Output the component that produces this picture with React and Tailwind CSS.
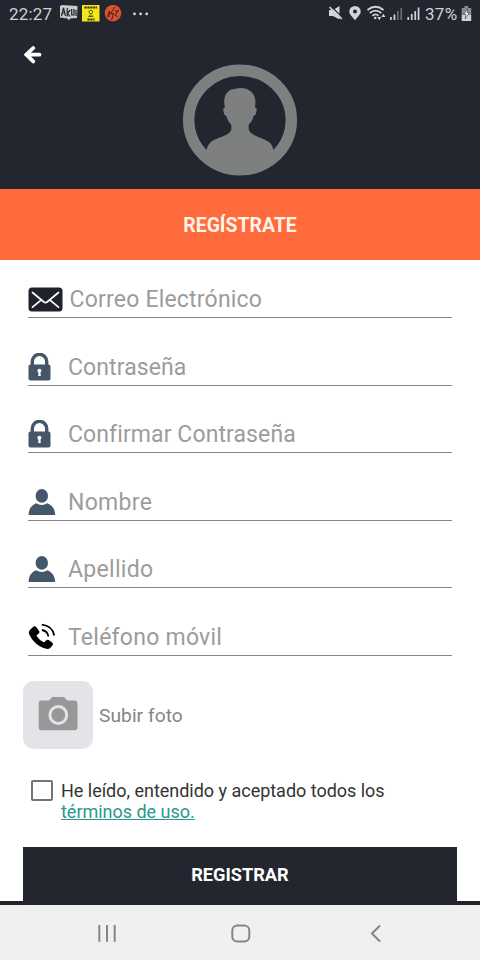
import React, { useState } from 'react';

const MailIcon = () => (
    <svg width="35" height="25" viewBox="0 0 35 25" fill="none">
        <rect x="0.5" y="0.5" width="34" height="24" rx="3.5" fill="#20222b" />
        <path d="M4.5 5.5 L15.9 15 Q17.5 16.2 19.1 15 L30.5 5.5 M4.5 20.2 L13.3 12.8 M30.5 20.2 L21.7 12.8" stroke="#fff" strokeWidth="1.7" strokeLinecap="round" />
    </svg>
);

const LockIcon = () => (
    <svg width="23" height="28" viewBox="0 0 23 28" fill="none">
        <path d="M4.3 13 V8.6 a7.2 7.2 0 0 1 14.4 0 V13" stroke="#45566a" strokeWidth="3.4" />
        <rect x="0.5" y="11.6" width="22" height="15.9" rx="2" fill="#45566a" />
        <circle cx="11.4" cy="17.7" r="2" fill="#fff" />
        <path d="M10.6 18 h1.7 l.5 5 h-2.6 Z" fill="#fff" />
    </svg>
);

const UserIcon = () => (
    <svg width="28" height="26" viewBox="0 0 28 26" fill="#45586b">
        <ellipse cx="13.8" cy="6.9" rx="6.2" ry="6.8" />
        <path d="M.6 26 C.8 19.5 3.4 16.4 8.2 14.2 Q13.8 17.6 19.4 14.2 C24.2 16.4 26.9 19.5 27.2 26 Z" />
    </svg>
);

const PhoneIcon = () => (
    <svg width="28" height="27" viewBox="0 0 28 27" fill="none">
        <path d="M2.4 6.4 L5.6 3.5 Q7 2.6 8.2 4 L11.1 8 Q12 9.4 10.8 10.5 L8.8 12.1 Q8.5 12.8 9 13.6 Q11.5 17.3 15.3 19.1 Q16.2 19.5 16.8 18.8 L18.2 17.2 Q19.3 16.2 20.7 17 L24.4 19.8 Q25.6 21 24.6 22.3 L22.2 25 Q20.7 26.3 18.4 25.8 Q11 24.2 5.5 18 Q1.4 13.2 .8 9.6 Q.8 7.6 2.4 6.4 Z" fill="#000" />
        <path d="M13.9 7 Q19.4 7.8 20.5 13.5" stroke="#000" strokeWidth="1.8" />
        <path d="M13.7 1.6 Q24.5 2.8 26.2 12.5" stroke="#000" strokeWidth="1.8" />
    </svg>
);

const Avatar = () => (
    <svg width="116" height="112" viewBox="0 0 116 112" fill="#7e8080">
        <ellipse cx="58" cy="56" rx="51.3" ry="49.7" fill="none" stroke="#7e8080" strokeWidth="11.5" />
        <path d="M43 43.5 C41.8 39 42 34 43.6 31 C45.2 27.6 48.5 25.2 52.5 25 C54.5 25 55 24.2 58 24 C66 23.6 72.5 28.5 73.3 36 C73.5 39 73.3 41 73 43.5 Q75 43.6 74.6 46.5 Q74 51.6 71.6 52 Q70 58 66.7 60.5 V66 C70 72.5 80 73 87 78 Q91 81 91.7 88 L92 90 Q78 107 58 107 Q38 107 24 90 L24.5 87 Q25 81 29.5 77.5 C36 73 46 72.5 49.3 66 V60.5 Q46 58 44.4 52 Q42 51.6 41.3 46.5 Q41 43.6 43 43.5 Z" />
    </svg>
);

const CameraIcon = () => (
    <svg width="40" height="35" viewBox="0 0 40 35" fill="#989898">
        <path d="M3.5 4.5 H11 L14.3 1 H26 L29.3 4.5 H36.5 Q39.5 4.5 39.5 7.5 V31.5 Q39.5 34.3 36.5 34.3 H3.5 Q.7 34.3 .7 31.5 V7.5 Q.7 4.5 3.5 4.5 Z" />
        <circle cx="20.3" cy="19" r="8.4" stroke="#e3e4e8" strokeWidth="3" />
    </svg>
);

const AppBadges = () => (
    <svg width="96" height="20" viewBox="0 0 96 20">
        {/* banner */}
        <path d="M0 1 L2 0 L17.5 1 L17 13 L10 13.5 L9 15.5 L7.5 13.5 L0 12.5 Z" fill="#c9c9c9" />
        <path d="M1.5 11 L3.5 3 L5.5 11 M2.3 8 H5 M7.2 3 V11.5 M10.3 5 L7.5 8 L10 11.5 M11.7 4 V10 H14 V4 M16 11 V5" stroke="#22242b" strokeWidth="1.2" fill="none" />
        {/* yellow sticker */}
        <rect x="22" y="0" width="17.5" height="16.5" fill="#f3e61c" />
        <path d="M24.5 2.5 H37 M27.5 14.5 H34.5" stroke="#342f10" strokeWidth="1.8" strokeDasharray="2.2 .7" />
        <circle cx="30.8" cy="7" r="1.8" fill="none" stroke="#625c10" strokeWidth="1" />
        <path d="M28.5 11.5 Q30.8 8 33 11.5 Z" fill="none" stroke="#625c10" strokeWidth="1" />
        {/* red disc */}
        <circle cx="53" cy="8.2" r="8.3" fill="#d9512f" />
        <path d="M47.5 12 L49.5 6 L49 12 M51.5 15 L53.5 8.5 H50.5 L55 2 M55 6.5 L58.5 5.5 L55 10 L57.5 11.5" stroke="#401b18" strokeWidth="1" fill="none" />
        {/* more */}
        <g fill="#d5d6d8">
            <circle cx="74.5" cy="8.9" r="1.4" />
            <circle cx="80.6" cy="8.9" r="1.4" />
            <circle cx="86.7" cy="8.9" r="1.4" />
        </g>
    </svg>
);

const SystemIcons = () => (
    <svg width="94" height="18" viewBox="328 5 94 18" fill="#d3d4d6">
        {/* muted */}
        <path d="M329 10 H333 L339.5 6 V19.5 L333 16 H329 Z" />
        <path d="M330.5 6 L342.5 17.5" stroke="#23262f" strokeWidth="1.2" />
        <path d="M329.5 7 L341.8 18.8" stroke="#d3d4d6" strokeWidth="1.7" />
        {/* location */}
        <path fillRule="evenodd" d="M355 20.2 C352.5 17 349.3 14.6 349.3 11.5 A5.7 5.5 0 0 1 360.7 11.5 C360.7 14.6 357.5 17 355 20.2 Z M355 9.6 A2 2 0 1 0 355 13.6 A2 2 0 1 0 355 9.6 Z" />
        {/* wifi */}
        <g fill="none" stroke="#d3d4d6" strokeWidth="1.8">
            <path d="M367.5 10 Q375.5 3.5 383.5 10" />
            <path d="M369.8 13 Q375.5 8.2 381.3 13" />
            <path d="M372.3 15.8 Q375.5 13 378.5 15.6" />
        </g>
        <circle cx="375.2" cy="18" r="1.3" />
        <path d="M377.3 17 L379.3 20.3 L381.2 17 Z M381.3 17 L383.4 13.8 L385.4 17 Z" />
        {/* signal */}
        <path d="M390.1 17 h1.7 v3 h-1.7 Z M393.6 14.5 h1.7 v5.5 h-1.7 Z" />
        <path d="M397 11 h1.7 v9 h-1.7 Z M400.4 8 h1.7 v12 h-1.7 Z" fill="#696b71" />
        <path d="M407.4 17 h1.7 v3 h-1.7 Z M410.9 14 h1.7 v6 h-1.7 Z M414.4 11 h1.7 v9 h-1.7 Z M417.7 7.5 h1.7 v12.5 h-1.7 Z" />
    </svg>
);

const BatteryIcon = () => (
    <svg width="11" height="16" viewBox="0 0 11 16">
        <path d="M3.5 0 H7.2 V2 H10.2 V9 H.7 V2 H3.5 Z" fill="#8c8e91" />
        <rect x=".7" y="9" width="9.5" height="6" fill="#d3d4d6" />
        <path d="M6.7 2.7 L2.7 8.2 H5 L4.2 12.8 L8.4 6.8 H6 Z" fill="#fff" stroke="#33363d" strokeWidth=".6" />
    </svg>
);

const fields = [
    { label: 'Correo Electrónico', icon: MailIcon, pad: 'pl-[6.5px]', tracking: 'tracking-[0.2px]', offset: 'mb-[5.5px]' },
    { label: 'Contraseña', icon: LockIcon, pad: 'pl-[17px]', tracking: 'tracking-[0.1px]', offset: 'mb-[4px]' },
    { label: 'Confirmar Contraseña', icon: LockIcon, pad: 'pl-[17px]', tracking: 'tracking-[0.1px]', offset: 'mb-[4px]' },
    { label: 'Nombre', icon: UserIcon, pad: 'pl-[12px]', tracking: 'tracking-[0.3px]', offset: 'mb-[5px]' },
    { label: 'Apellido', icon: UserIcon, pad: 'pl-[12px]', tracking: 'tracking-[0.3px]', offset: 'mb-[5px]' },
    { label: 'Teléfono móvil', icon: PhoneIcon, pad: 'pl-[12px]', tracking: 'tracking-[0.25px]', offset: 'mb-[4.5px]' },
];

const Field = ({ label, icon: Icon, pad, tracking, offset }) => (
    <div className="flex h-[67.5px] items-end border-b-[1.5px] border-[#858585]">
        <div className={`shrink-0 ${offset}`}>
            <Icon />
        </div>
        <span className={`mb-[2px] text-[23px] leading-[30px] whitespace-nowrap text-[#9c9c9c] ${tracking} ${pad}`}>{label}</span>
    </div>
);

const App = () => {
    const [accepted, setAccepted] = useState(false);

    return (
        <div className="flex h-[960px] w-[480px] flex-col overflow-hidden bg-white font-['Roboto',sans-serif]">
            <header className="h-[189px] shrink-0 bg-[#23262f]">
                <div className="flex h-[28px] items-start pt-[5px] pl-[9px] text-[17px] leading-[19px] text-[#d0d1d3]">
                    <span className="w-[51px] tracking-[0.2px]">22:27</span>
                    <div className="w-[268px]">
                        <AppBadges />
                    </div>
                    <SystemIcons />
                    <span className="w-[39px] pl-[3px] tracking-[0.3px]">37%</span>
                    <div className="pt-[1px]">
                        <BatteryIcon />
                    </div>
                </div>
                <div className="h-[36px] pt-[17px] pl-[24px]">
                    <svg width="18" height="20" viewBox="0 0 18 20" fill="none" stroke="#fff" strokeWidth="3.8" strokeLinecap="round">
                        <path d="M9.2 3 L2.3 9.7 L9.2 16.4 M3.5 9.7 H15.5" />
                    </svg>
                </div>
                <div className="flex justify-center">
                    <Avatar />
                </div>
            </header>

            <div className="flex h-[70.5px] shrink-0 items-center justify-center bg-[#ff6b3d] pt-[2px]">
                <h1 className="text-[19.4px] font-bold text-[#fff4e8]">REGÍSTRATE</h1>
            </div>

            <main className="flex flex-1 flex-col">
                <div className="-mt-[8.9px] px-[28px]">
                    {fields.map((field) => (
                        <Field key={field.label} {...field} />
                    ))}
                </div>

                <div className="mt-[25.4px] flex items-center pl-[23px]">
                    <div className="flex h-[68px] w-[70px] items-center justify-center rounded-[11px] bg-[#e3e4e8] pb-[4px]">
                        <CameraIcon />
                    </div>
                    <span className="pt-[2px] pl-[6px] text-[19.2px] tracking-[0.05px] text-[#858585]">Subir foto</span>
                </div>

                <div className="mt-[31px] flex pl-[31px]">
                    <button
                        className={`h-[21px] w-[21.5px] shrink-0 rounded-[2px] border-2 border-[#757575] ${accepted ? 'bg-[#2a9d8a]' : 'bg-white'}`}
                        onClick={() => setAccepted(!accepted)}
                    />
                    <p className="pl-[8.5px] text-[18px] leading-[21px] tracking-[-0.02px] whitespace-nowrap text-[#333]">
                        He leído, entendido y aceptado todos los
                        <br />
                        <a className="text-[#28988a] underline">términos de uso.</a>
                    </p>
                </div>

                <div className="mt-auto flex h-[58.5px] items-end bg-linear-to-b from-white from-[54px] to-[#20232a] to-[54px] pr-[23.5px] pl-[23.4px]">
                    <button className="h-[58.5px] w-full bg-[#23262f] pb-[3px] text-[18.2px] font-bold text-white">REGISTRAR</button>
                </div>
            </main>

            <nav className="h-[55px] shrink-0 bg-[#f0f0f0] pt-[18px] pl-[97px]">
                <svg width="286" height="20" viewBox="0 0 286 20" fill="none" stroke="#858585" strokeWidth="2">
                    <path d="M2.3 2 V18.7 M10 2 V18.7 M17.7 2 V18.7" />
                    <rect x="135.3" y="2.5" width="17" height="16" rx="5" />
                    <path d="M283 2.5 L275 10.5 L283 18.5" />
                </svg>
            </nav>
        </div>
    );
};

export default App;
